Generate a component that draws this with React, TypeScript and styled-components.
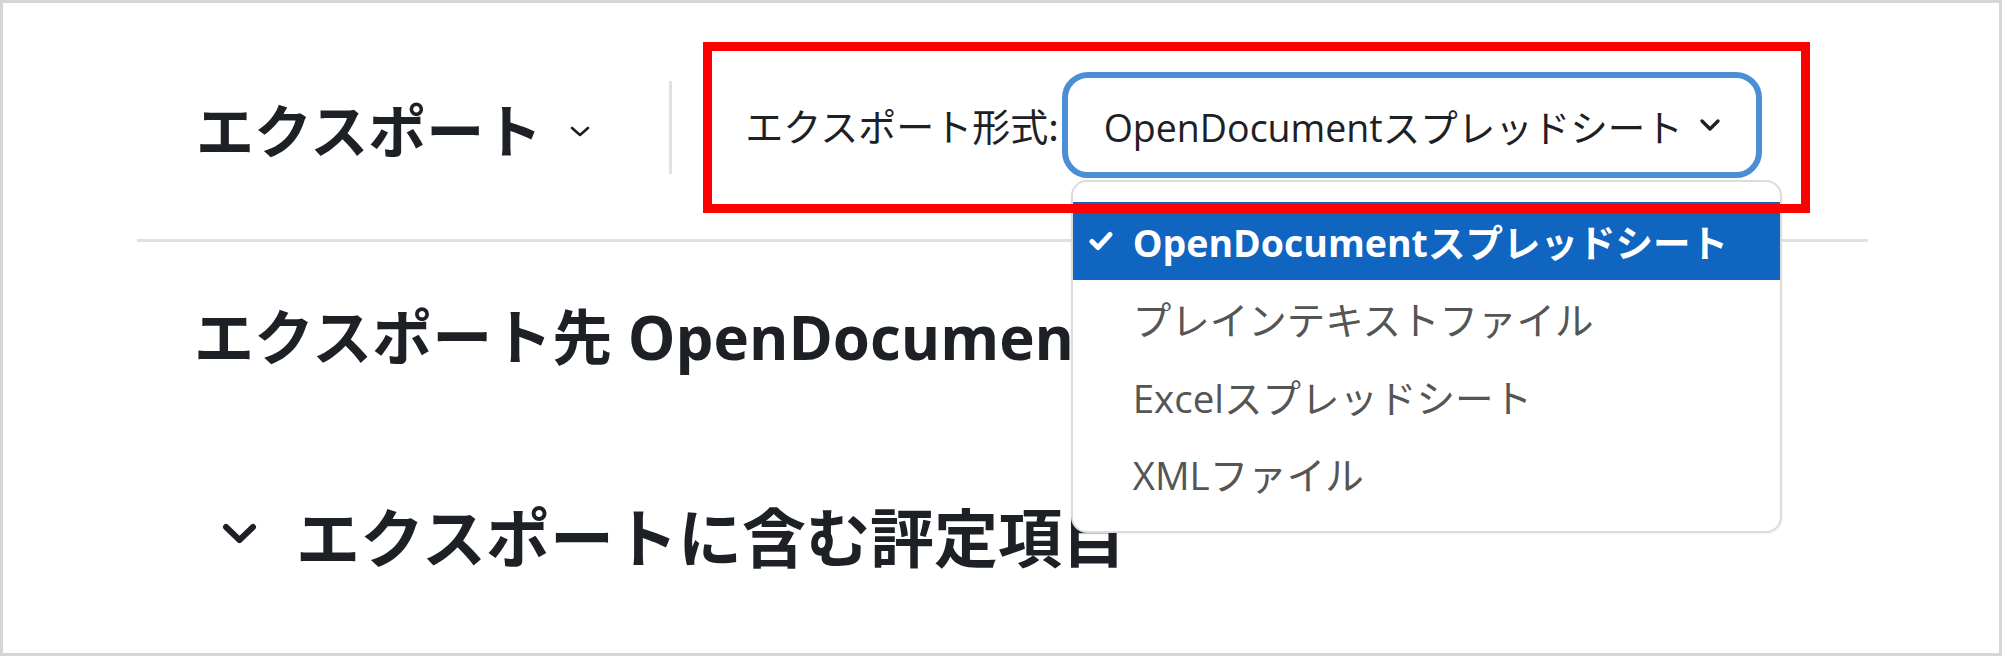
import React from "react";
import styled, { createGlobalStyle } from "styled-components";

const GlobalStyle = createGlobalStyle`
  html, body { margin: 0; padding: 0; background: #fff; }
  body { font-family: "Open Sans", "Noto Sans CJK JP", sans-serif; color: #1d2125; }
  * { box-sizing: border-box; }
`;

const Frame = styled.div`
  width: 2002px;
  height: 656px;
  border: 3px solid #d6d6d6;
  background: #fff;
  overflow: hidden;
`;

const Content = styled.div`
  padding: 39px 131px 0 134px;
`;

const HeaderRow = styled.div`
  display: flex;
  align-items: center;
  height: 171px;
  padding-left: 59px;
`;

const PageTitle = styled.h2`
  margin: 0;
  font-family: "Noto Sans CJK JP", sans-serif;
  font-weight: 700;
  font-size: 58px;
  line-height: 1;
  color: #1d2125;
`;

const TitleCaret = styled.svg`
  margin-left: 27px;
  margin-top: 8px;
  width: 22px;
  height: 13px;
  flex: none;
`;

const Divider = styled.div`
  width: 3px;
  height: 93px;
  background: #dee2e6;
  margin-left: 78px;
  flex: none;
`;

const FormatGroup = styled.div`
  position: relative;
  display: flex;
  align-items: center;
  margin-left: 73px;
  margin-bottom: 5px;
`;

const FormatLabel = styled.label`
  font-family: "Noto Sans CJK JP", sans-serif;
  font-size: 38px;
  line-height: 1;
  color: #1d2125;
  white-space: nowrap;
`;

const SelectWrap = styled.div`
  position: relative;
  margin-left: 3px;
`;

const SelectBox = styled.div`
  width: 700px;
  height: 106px;
  border: 6px solid #4a8fd6;
  border-radius: 26px;
  display: flex;
  align-items: center;
  justify-content: space-between;
  padding: 0 35px 0 36px;
  font-size: 37.5px;
  color: #1d2125;
  white-space: nowrap;
  background: #fff;
`;

const SelectCaret = styled.svg`
  width: 22px;
  height: 14px;
  flex: none;
`;

const Menu = styled.ul`
  position: absolute;
  left: 9px;
  top: 108px;
  width: 711px;
  height: 353px;
  margin: 0;
  padding: 20px 0 0;
  list-style: none;
  background: #fff;
  border: 2px solid #dcdcdc;
  border-radius: 16px;
  box-shadow: 0 1px 3px rgba(0, 0, 0, 0.06);
  z-index: 1;
`;

const MenuItem = styled.li<{ $selected?: boolean }>`
  height: 77.5px;
  display: flex;
  align-items: center;
  padding-left: 16px;
  background: ${(p) => (p.$selected ? "#0f65bf" : "transparent")};
  color: ${(p) => (p.$selected ? "#ffffff" : "#555555")};
  font-weight: ${(p) => (p.$selected ? 700 : 400)};
  font-size: ${(p) => (p.$selected ? "37.5px" : "38.5px")};
  white-space: nowrap;
`;

const CheckSlot = styled.span`
  width: 44px;
  flex: none;
  display: flex;
  align-items: center;
`;

const RedFrame = styled.div`
  position: absolute;
  left: -42px;
  right: -48px;
  top: -30px;
  bottom: -35px;
  border: 9px solid #ff0000;
  pointer-events: none;
  z-index: 2;
`;

const Rule = styled.div`
  height: 3px;
  background: #dee2e6;
  margin-top: 26px;
`;

const Section = styled.div`
  padding-left: 57px;
`;

const ExportTitle = styled.h3`
  margin: 65px 0 0;
  font-family: "Open Sans", "Noto Sans CJK JP", sans-serif;
  font-weight: 700;
  font-size: 60px;
  line-height: 1;
  color: #1d2125;
  white-space: nowrap;
`;

const CollapseRow = styled.div`
  display: flex;
  align-items: center;
  margin-top: 135px;
  padding-left: 84px;
`;

const CollapseCaret = styled.svg`
  width: 37px;
  height: 24px;
  flex: none;
  margin-right: 38px;
`;

const CollapseTitle = styled.h4`
  margin: 0;
  font-family: "Noto Sans CJK JP", sans-serif;
  font-weight: 700;
  font-size: 64px;
  line-height: 1;
  color: #1d2125;
  white-space: nowrap;
`;

const options = [
  "OpenDocumentスプレッドシート",
  "プレインテキストファイル",
  "Excelスプレッドシート",
  "XMLファイル",
];

export default function App() {
  return (
    <>
      <GlobalStyle />
      <Frame>
        <Content>
          <HeaderRow>
            <PageTitle>エクスポート</PageTitle>
            <TitleCaret viewBox="0 0 22 13">
              <path d="M3 3 L11 10 L19 3" fill="none" stroke="#1d2125" strokeWidth="2.6" strokeLinecap="round" strokeLinejoin="round" />
            </TitleCaret>
            <Divider />
            <FormatGroup>
              <FormatLabel>エクスポート形式:</FormatLabel>
              <SelectWrap>
                <SelectBox>
                  <span>OpenDocumentスプレッドシート</span>
                  <SelectCaret viewBox="0 0 22 14">
                    <path d="M3 3 L11 11 L19 3" fill="none" stroke="#1d2125" strokeWidth="3.4" strokeLinecap="round" strokeLinejoin="round" />
                  </SelectCaret>
                </SelectBox>
                <Menu>
                  {options.map((o, i) => (
                    <MenuItem key={o} $selected={i === 0}>
                      <CheckSlot>
                        {i === 0 && (
                          <svg width="24" height="20" viewBox="0 0 24 20">
                            <path d="M3 10.5 L9 16.5 L21 3.5" fill="none" stroke="#fff" strokeWidth="5" strokeLinecap="round" strokeLinejoin="round" />
                          </svg>
                        )}
                      </CheckSlot>
                      {o}
                    </MenuItem>
                  ))}
                </Menu>
              </SelectWrap>
              <RedFrame />
            </FormatGroup>
          </HeaderRow>
          <Rule />
          <Section>
            <ExportTitle>エクスポート先 OpenDocumentスプレッドシート</ExportTitle>
          </Section>
          <CollapseRow>
            <CollapseCaret viewBox="0 0 37 24">
              <path d="M5 5 L18.5 18 L32 5" fill="none" stroke="#1d2125" strokeWidth="6" strokeLinecap="round" strokeLinejoin="round" />
            </CollapseCaret>
            <CollapseTitle>エクスポートに含む評定項目</CollapseTitle>
          </CollapseRow>
        </Content>
      </Frame>
    </>
  );
}
